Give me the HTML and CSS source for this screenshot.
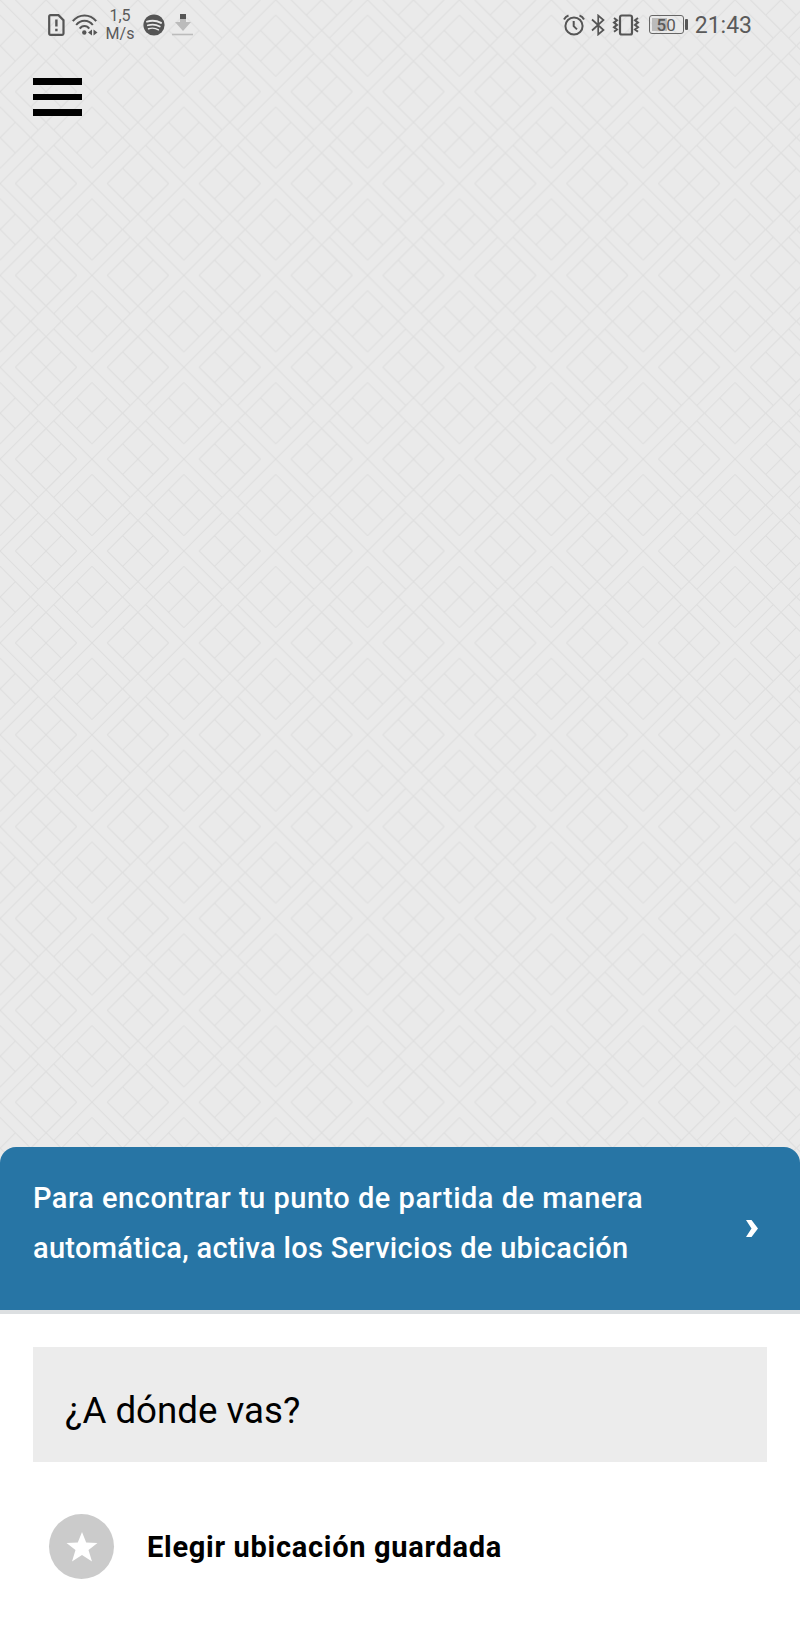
FILE: index.html
```
<!DOCTYPE html>
<html lang="es">
<head>
<meta charset="UTF-8">
<meta name="viewport" content="width=device-width, initial-scale=1.0">
<title>¿A dónde vas?</title>
<link rel="stylesheet" href="styles.css">
</head>
<body>
    <div class="map">
        <!-- Empty map grid -->
        <svg class="map-grid" width="800" height="1170">
            <defs>
                <pattern id="grid" x="0.1" y="-0.2" width="91.87" height="91.87" patternUnits="userSpaceOnUse" viewBox="0 0 6 6">
                    <path d="M0 0 2.5 2.5M6 0 3.5 2.5M0 6 2.5 3.5M6 6 3.5 3.5"/>
                    <path d="M3 2 4 3 3 4 2 3Z"/>
                    <path d="M1 0 3 2 5 0M1 6 3 4 5 6M0 1 2 3 0 5M6 1 4 3 6 5"/>
                    <path d="M2 1 3 0 4 1M2 5 3 6 4 5M1 2 0 3 1 4M5 2 6 3 5 4"/>
                </pattern>
            </defs>
            <rect width="800" height="1170" fill="url(#grid)"/>
        </svg>

        <div class="status-bar">
            <div class="status-left">
                <svg class="icon-sim" width="17" height="22" viewBox="0 0 17 22">
                    <path d="M2.5 1.2h8l5 5v13.3q0 1.3-1.3 1.3H2.5q-1.3 0-1.3-1.3v-17q0-1.3 1.3-1.3z" fill="none" stroke="#555" stroke-width="2.2"/>
                    <path d="M8.4 5.5v7M8.4 14.8v2.4" stroke="#555" stroke-width="2.4"/>
                </svg>
                <svg class="icon-wifi" width="26" height="22" viewBox="0 0 26 22">
                    <g fill="none" stroke="#555" stroke-width="2">
                        <path d="M.8 7.2Q5.5 1.5 12.5 1.5T24.2 7.2"/>
                        <path d="M4.2 11Q7.5 6.8 12.5 6.8T20.8 11"/>
                        <path d="M7.8 14.6Q9.5 12 12.5 12T17.2 14.6"/>
                    </g>
                    <circle cx="12.3" cy="18.5" r="2.2" fill="#555"/>
                    <path d="M20 15.5v6l-4-3zM21.5 15.5v6l4-3z" fill="#555"/>
                </svg>
                <div class="speed">1,5<br>M/s</div>
                <svg class="icon-music" width="22" height="22" viewBox="0 0 22 22">
                    <circle cx="11" cy="11" r="10.6" fill="#555"/>
                    <g fill="none" stroke="#eaeaea" stroke-linecap="round">
                        <path d="M4 7.6q7.5-2.2 14 1.3" stroke-width="2"/>
                        <path d="M4.8 11.3q6.6-1.9 12 1.2" stroke-width="1.7"/>
                        <path d="M5.5 14.7q5.5-1.5 10 1.1" stroke-width="1.4"/>
                    </g>
                </svg>
                <svg class="icon-download" width="21" height="23" viewBox="0 0 21 23">
                    <path d="M8 6h6v3h5l-8 9-8-9h5z" fill="#bbb"/>
                    <path d="M8 1h6v5H8z" fill="#555"/>
                    <path d="M0 21.5h21" stroke="#bbb" stroke-width="1.6"/>
                </svg>
            </div>
            <div class="status-right">
                <svg width="22" height="22" viewBox="0 0 22 22" fill="none" stroke="#555" stroke-width="2">
                    <circle cx="11" cy="12" r="8.6"/>
                    <path d="M10.7 7v5.2l3.3 3.2M1 5.5q1.5-3 4.5-4M21 5.5q-1.5-3-4.5-4"/>
                </svg>
                <svg class="icon-bluetooth" width="14" height="22" viewBox="0 0 14 22" fill="none" stroke="#555" stroke-width="1.7">
                    <path d="M1 5.5 12.5 16 7.2 20.5v-19L12.5 6 1 16.5"/>
                </svg>
                <svg class="icon-vibrate" width="28" height="22" viewBox="0 0 28 22" fill="none" stroke="#555">
                    <rect x="8" y="1.5" width="12" height="19" rx="1.8" stroke-width="2.2"/>
                    <path d="M2 4l3 2.3-3 2.3 3 2.3-3 2.3 3 2.3-3 2.3M26 4l-3 2.3 3 2.3-3 2.3 3 2.3-3 2.3 3 2.3" stroke-width="2"/>
                </svg>
                <div class="battery"><b>5</b>0</div>
                <span class="clock">21:43</span>
            </div>
        </div>

        <div class="menu-button">
            <span></span>
            <span></span>
            <span></span>
        </div>
    </div>

    <div class="location-banner">
        <p>Para encontrar tu punto de partida de manera<br><span class="line-two">automática, activa los Servicios de ubicación</span></p>
        <svg width="12" height="17" viewBox="0 0 12 17">
            <path d="M0 0h5.5L12 8.5 5.5 17H0l5.5-8.5z" fill="#fff"/>
        </svg>
    </div>

    <div class="search-panel">
        <div class="search-box">¿A dónde vas?</div>
        <div class="saved-place">
            <div class="star">
                <svg width="32" height="30" viewBox="0 0 32 30">
                    <path d="M16 0 20.2 10.5 31.5 11 22.5 18l3.5 11.5L16 23 6 29.5 9.5 18 .5 11 11.8 10.5z" fill="#fff"/>
                </svg>
            </div>
            <span>Elegir ubicación guardada</span>
        </div>
    </div>
</body>
</html>
```

FILE: styles.css
```
* {
    box-sizing: border-box;
}
body {
    margin: 0;
    width: 800px;
    height: 1633px;
    overflow: hidden;
    font-family: Roboto, sans-serif;
    background-color: #fff;
}
.map {
    position: relative;
    height: 1147px;
    background-color: #eaeaea;
}
/* grid lies behind the status bar and menu, and runs under the banner corners */
.map-grid {
    position: absolute;
    top: 0;
    left: 0;
    fill: none;
    background-color: #eaeaea;
}
.map-grid pattern path {
    stroke: #dedede;
    stroke-width: 0.07;
}
.status-bar {
    position: relative;
    display: flex;
    justify-content: space-between;
    height: 49px;
    padding: 0 48px;
    color: #5a5a5a;
}
.status-left, .status-right {
    display: flex;
    align-items: center;
}
.icon-wifi {
    margin-left: 7px;
}
.speed {
    width: 30px;
    margin-left: 7px;
    font-size: 16px;
    line-height: 18px;
    text-align: center;
}
.icon-music {
    margin-left: 8px;
}
.icon-download {
    margin-left: 7px;
}
.icon-bluetooth {
    margin-left: 6px;
}
.icon-vibrate {
    margin-left: 7px;
}
.battery {
    position: relative;
    width: 35px;
    height: 19px;
    margin-left: 9px;
    border: 1px solid #666;
    border-radius: 3px;
    font-size: 17px;
    line-height: 18px;
    text-align: center;
    background: linear-gradient(#bbb, #bbb) 2px 2px / 15px 13px no-repeat;
}
.battery b {
    font-weight: 500;
}
.battery::after {
    content: "";
    position: absolute;
    top: 3px;
    right: -5px;
    width: 3px;
    height: 11px;
    border-radius: 1px;
    background-color: #555;
}
.clock {
    margin: 2px 0 0 11px;
    font-size: 23px;
}
.menu-button {
    position: relative;
    display: flex;
    flex-direction: column;
    gap: 9px;
    width: 49px;
    margin: 29px 0 0 33px;
}
.menu-button span {
    height: 6.6px;
    background-color: #000;
}
.location-banner {
    position: relative;
    display: flex;
    align-items: center;
    justify-content: space-between;
    height: 163px;
    padding: 0 42px 0 33px;
    border-radius: 16px 16px 0 0;
    color: #fff;
    background-color: #2775a5;
}
.location-banner p {
    margin: 0 0 10px;
    font-size: 29px;
    font-weight: 500;
    line-height: 49.5px;
    letter-spacing: 0.5px;
    white-space: nowrap;
}
.location-banner .line-two {
    letter-spacing: 0.3px;
}
.search-panel {
    padding: 33px 33px 0;
    border-top: 4px solid #dcdfe1;
}
.search-box {
    height: 115px;
    padding: 13px 32px 0;
    font-size: 36.7px;
    line-height: 102px;
    color: #000;
    background-color: #ececec;
}
.saved-place {
    display: flex;
    align-items: center;
    margin: 52px 0 0 16px;
    font-size: 29px;
    font-weight: 700;
    letter-spacing: 0.7px;
    color: #000;
}
.star {
    display: flex;
    align-items: center;
    justify-content: center;
    width: 65px;
    height: 65px;
    margin-right: 33px;
    border-radius: 50%;
    background-color: #cbcbcb;
}
```
